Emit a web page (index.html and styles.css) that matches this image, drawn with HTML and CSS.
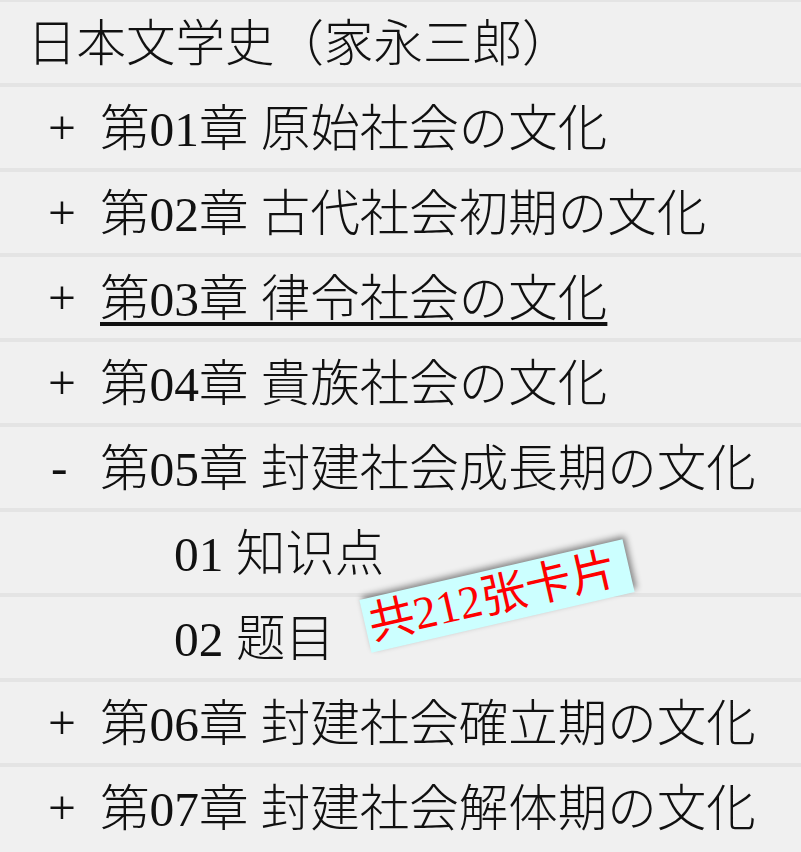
FILE: index.html
```html
<!DOCTYPE html>
<html lang="ja">
<head>
    <meta charset="UTF-8">
    <meta name="viewport" content="width=device-width, initial-scale=1.0">
    <title>日本文学史</title>
    <link rel="stylesheet" href="styles.css">
</head>
<body>

    <ul class="toc">
        <li class="toc-row toc-title">日本文学史（家永三郎）</li>
        <li class="toc-row"><span class="toggle">+</span><span class="label">第01章 原始社会の文化</span></li>
        <li class="toc-row"><span class="toggle">+</span><span class="label">第02章 古代社会初期の文化</span></li>
        <li class="toc-row"><span class="toggle">+</span><span class="label active">第03章 律令社会の文化</span></li>
        <li class="toc-row"><span class="toggle">+</span><span class="label">第04章 貴族社会の文化</span></li>
        <li class="toc-row"><span class="toggle minus">-</span><span class="label">第05章 封建社会成長期の文化</span></li>
        <li class="toc-row toc-sub"><span class="label">01 知识点</span></li>
        <li class="toc-row toc-sub"><span class="label">02 题目</span></li>
        <li class="toc-row"><span class="toggle">+</span><span class="label">第06章 封建社会確立期の文化</span></li>
        <li class="toc-row"><span class="toggle">+</span><span class="label">第07章 封建社会解体期の文化</span></li>
    </ul>

    <div class="card-count">共212张卡片</div>

</body>
</html>
```

FILE: styles.css
```css
body {
    margin: 0;
    padding: 0;
    background-color: #f0f0f0;
    font-family: 'Liberation Serif', 'Noto Sans CJK JP', serif;
    color: #111;
    overflow: hidden;
    position: relative;
}

.toc {
    list-style: none;
    margin: -2px 0 0 0;
    padding: 0;
}

.toc-row {
    display: flex;
    align-items: center;
    height: 85px;
    padding-bottom: 6px;
    box-sizing: border-box;
    border-top: 4px solid #e4e4e4;
    font-size: 49.5px;
    font-weight: 300;
    padding-left: 48px;
    white-space: nowrap;
}

.toc-title {
    padding-left: 27px;
}

.toc-sub {
    padding-left: 174px;
}

.toggle {
    width: 52px;
    flex-shrink: 0;
    padding-top: 5px;
}

.toggle.minus {
    padding-left: 3px;
    width: 49px;
}

.label.active {
    text-decoration: underline;
    text-decoration-thickness: 4px;
    text-underline-offset: 6px;
}

.card-count {
    position: absolute;
    left: 362px;
    top: 569px;
    width: 270px;
    height: 54px;
    box-sizing: border-box;
    padding-left: 4px;
    background-color: #ccffff;
    color: #ff0000;
    font-family: 'Liberation Serif', 'Noto Sans CJK SC', serif;
    font-size: 46px;
    line-height: 54px;
    white-space: nowrap;
    transform: rotate(-13deg);
    box-shadow: 3px -3px 6px rgba(0, 0, 0, 0.45);
}
```
